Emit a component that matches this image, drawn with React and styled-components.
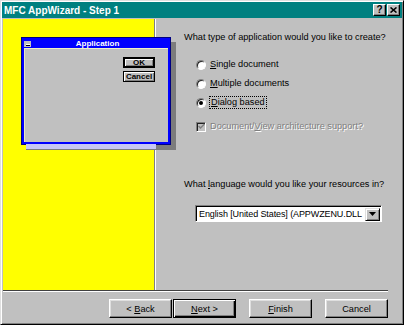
import React from "react";
import styled, { createGlobalStyle } from "styled-components";

const Global = createGlobalStyle`
  html, body { margin: 0; padding: 0; background: #c0c0c0; }
  body { font-family: "Liberation Sans", Arial, sans-serif; }
`;

const Window = styled.div`
  width: 404px;
  height: 325px;
  box-sizing: border-box;
  background: #c0c0c0;
  border: 1px solid;
  border-color: #dfdfdf #000 #000 #dfdfdf;
  box-shadow: inset 1px 1px #fff, inset -1px -1px #808080;
  padding: 1px;
  display: flex;
  flex-direction: column;
  overflow: hidden;
`;

const TitleBar = styled.div`
  height: 16px;
  background: #008080;
  display: flex;
  align-items: center;
  padding: 0 2px 0 2px;
  flex-shrink: 0;
`;

const TitleText = styled.span`
  flex: 1;
  color: #fff;
  font-weight: bold;
  font-size: 10px;
`;

const TitleButton = styled.span`
  width: 13px;
  height: 12px;
  box-sizing: border-box;
  background: #c0c0c0;
  border: 1px solid;
  border-color: #fff #000 #000 #fff;
  box-shadow: inset -1px -1px #808080;
  display: flex;
  align-items: center;
  justify-content: center;
  font-weight: bold;
  font-size: 10px;
  line-height: 1;
  color: #000;
  margin-left: ${(p) => (p.$gap ? "1px" : "0")};
`;

const Content = styled.div`
  display: flex;
  margin: 1px 0 0 1px;
  height: 271px;
  flex-shrink: 0;
`;

const YellowPanel = styled.div`
  width: 152px;
  background: #ffff00;
  border-right: 1px solid #808080;
  padding: 18px 0 0 18px;
  box-sizing: border-box;
  flex-shrink: 0;
`;

const MiniWindow = styled.div`
  position: relative;
  z-index: 1;
  width: 150px;
  height: 108px;
  box-sizing: border-box;
  background: #0000ff;
  border: 1px solid #000080;
  padding: 2px;
  display: flex;
  flex-direction: column;
  box-shadow: 5px 5px 0 #7c7c7c;
  &::after {
    content: "";
    position: absolute;
    left: 4px;
    top: 100%;
    width: 130px;
    height: 5px;
    background: #c8c8f4;
  }
`;

const MiniTitle = styled.div`
  height: 8px;
  display: flex;
  align-items: center;
  flex-shrink: 0;
`;

const SysBox = styled.span`
  width: 7px;
  height: 6px;
  background: #c0c0c0;
  display: flex;
  align-items: center;
  justify-content: center;
  &::before {
    content: "";
    width: 4px;
    height: 1px;
    background: #fff;
    box-shadow: 0 1px #000;
  }
`;

const MiniTitleText = styled.span`
  flex: 1;
  text-align: center;
  color: #fff;
  font-weight: bold;
  font-size: 8px;
  line-height: 8px;
  padding-right: 4px;
`;

const MiniClient = styled.div`
  flex: 1;
  background: #c0c0c0;
  border-top: 1px solid #f0f0c8;
  border-left: 1px solid #e8e8c0;
  display: flex;
  flex-direction: column;
  align-items: flex-end;
  padding: 8px 13px 0 0;
  gap: 3px;
`;

const MiniButton = styled.span`
  width: 32px;
  height: 11px;
  box-sizing: border-box;
  border: ${(p) => (p.$default ? "2px" : "1px")} solid #000;
  background: #c0c0c0;
  box-shadow: inset 1px 1px #fff, inset -1px -1px #808080;
  display: flex;
  align-items: center;
  justify-content: center;
  font-weight: bold;
  font-size: 8px;
  line-height: 1;
  color: #000;
`;

const RightPanel = styled.div`
  flex: 1;
  border-left: 1px solid #fff;
  padding: 12px 0 0 28px;
  display: flex;
  flex-direction: column;
  align-items: flex-start;
  font-size: 9.2px;
  color: #000;
`;

const Question = styled.div`
  line-height: 12px;
  white-space: nowrap;
  margin-top: ${(p) => p.$mt || 0}px;
`;

const OptionGroup = styled.div`
  margin: 12px 0 0 12px;
  display: flex;
  flex-direction: column;
`;

const OptionRow = styled.div`
  height: 19px;
  display: flex;
  align-items: center;
  gap: 4px;
  margin-top: ${(p) => p.$mt || 0}px;
  white-space: nowrap;
`;

const Radio = styled.span`
  width: 10px;
  height: 10px;
  box-sizing: border-box;
  border-radius: 50%;
  background: #fff;
  border: 1px solid;
  border-color: #808080 #fff #fff #808080;
  box-shadow: inset 1px 1px #202020;
  display: flex;
  align-items: center;
  justify-content: center;
  flex-shrink: 0;
  &::after {
    content: "";
    width: 4px;
    height: 4px;
    border-radius: 50%;
    background: #000;
    display: ${(p) => (p.$checked ? "block" : "none")};
  }
`;

const CheckBox = styled.span`
  width: 10px;
  height: 10px;
  box-sizing: border-box;
  background: #c0c0c0;
  border: 1px solid;
  border-color: #808080 #fff #fff #808080;
  box-shadow: inset 1px 1px #202020;
  display: flex;
  align-items: center;
  justify-content: center;
  flex-shrink: 0;
`;

const Label = styled.span`
  line-height: 11px;
  padding: ${(p) => (p.$focus ? "0 1px" : "0")};
  outline: ${(p) => (p.$focus ? "1px dotted #000" : "none")};
  color: ${(p) => (p.$disabled ? "#808080" : "#000")};
  text-shadow: ${(p) => (p.$disabled ? "1px 1px #fff" : "none")};
`;

const U = styled.span`
  text-decoration: underline;
`;

const Dropdown = styled.div`
  margin: 15px 0 0 11px;
  width: 187px;
  height: 17px;
  box-sizing: border-box;
  background: #fff;
  border: 1px solid;
  border-color: #808080 #fff #fff #808080;
  box-shadow: inset 1px 1px #000;
  display: flex;
  align-items: center;
  padding: 1px 1px 0 3px;
`;

const DropText = styled.span`
  flex: 1;
  white-space: nowrap;
  font-size: 9px;
  line-height: 13px;
  letter-spacing: -0.1px;
`;

const DropButton = styled.span`
  width: 15px;
  height: 13px;
  box-sizing: border-box;
  background: #c0c0c0;
  border: 1px solid;
  border-color: #dfdfdf #000 #000 #dfdfdf;
  box-shadow: inset 1px 1px #fff, inset -1px -1px #808080;
  display: flex;
  align-items: center;
  justify-content: center;
  flex-shrink: 0;
`;

const Separator = styled.div`
  margin-left: 1px;
  width: 385px;
  height: 1px;
  background: #404040;
  border-bottom: 1px solid #fff;
  flex-shrink: 0;
`;

const ButtonRow = styled.div`
  display: flex;
  justify-content: flex-end;
  padding: 7px 14px 0 0;
  gap: 13px;
`;

const Pair = styled.div`
  display: flex;
  gap: 1px;
`;

const Button = styled.span`
  width: 63px;
  height: 19px;
  box-sizing: border-box;
  background: #c0c0c0;
  border: 1px solid;
  border-color: ${(p) => (p.$default ? "#000" : "#fff #000 #000 #fff")};
  box-shadow: ${(p) =>
    p.$default
      ? "inset 1px 1px #fff, inset -1px -1px #000, inset -2px -2px #808080"
      : "inset -1px -1px #808080, inset 1px 1px #dfdfdf"};
  display: flex;
  align-items: center;
  justify-content: center;
  font-size: 9.2px;
  color: #000;
  white-space: pre;
`;

export default function App() {
  return (
    <>
      <Global />
      <Window>
        <TitleBar>
          <TitleText>MFC AppWizard - Step 1</TitleText>
          <TitleButton>?</TitleButton>
          <TitleButton $gap>
            <svg width="7" height="6" viewBox="0 0 7 6">
              <path d="M0.5 0.5 L6.5 5.5 M6.5 0.5 L0.5 5.5" stroke="#000" strokeWidth="1.6" />
            </svg>
          </TitleButton>
        </TitleBar>
        <Content>
          <YellowPanel>
            <MiniWindow>
              <MiniTitle>
                <SysBox />
                <MiniTitleText>Application</MiniTitleText>
              </MiniTitle>
              <MiniClient>
                <MiniButton $default>OK</MiniButton>
                <MiniButton>Cancel</MiniButton>
              </MiniClient>
            </MiniWindow>
          </YellowPanel>
          <RightPanel>
            <Question>What type of application would you like to create?</Question>
            <OptionGroup>
              <OptionRow>
                <Radio />
                <Label>
                  <U>S</U>ingle document
                </Label>
              </OptionRow>
              <OptionRow>
                <Radio />
                <Label>
                  <U>M</U>ultiple documents
                </Label>
              </OptionRow>
              <OptionRow>
                <Radio $checked />
                <Label $focus>
                  <U>D</U>ialog based
                </Label>
              </OptionRow>
              <OptionRow $mt={5}>
                <CheckBox>
                  <svg width="7" height="7" viewBox="0 0 7 7">
                    <path d="M0.5 3 L2.5 5 L6.5 1" stroke="#808080" strokeWidth="1.5" fill="none" />
                  </svg>
                </CheckBox>
                <Label $disabled>
                  Document/<U>V</U>iew architecture support?
                </Label>
              </OptionRow>
            </OptionGroup>
            <Question $mt={42}>
              What <U>l</U>anguage would you like your resources in?
            </Question>
            <Dropdown>
              <DropText>English [United States] (APPWZENU.DLL</DropText>
              <DropButton>
                <svg width="7" height="4" viewBox="0 0 7 4">
                  <path d="M0 0 H7 L3.5 4 Z" fill="#000" />
                </svg>
              </DropButton>
            </Dropdown>
          </RightPanel>
        </Content>
        <Separator />
        <ButtonRow>
          <Pair>
            <Button>
              <span>
                &lt; <U>B</U>ack
              </span>
            </Button>
            <Button $default>
              <span>
                <U>N</U>ext &gt;
              </span>
            </Button>
          </Pair>
          <Button>
            <span>
              <U>F</U>inish
            </span>
          </Button>
          <Button>
            <span>Cancel</span>
          </Button>
        </ButtonRow>
      </Window>
    </>
  );
}
